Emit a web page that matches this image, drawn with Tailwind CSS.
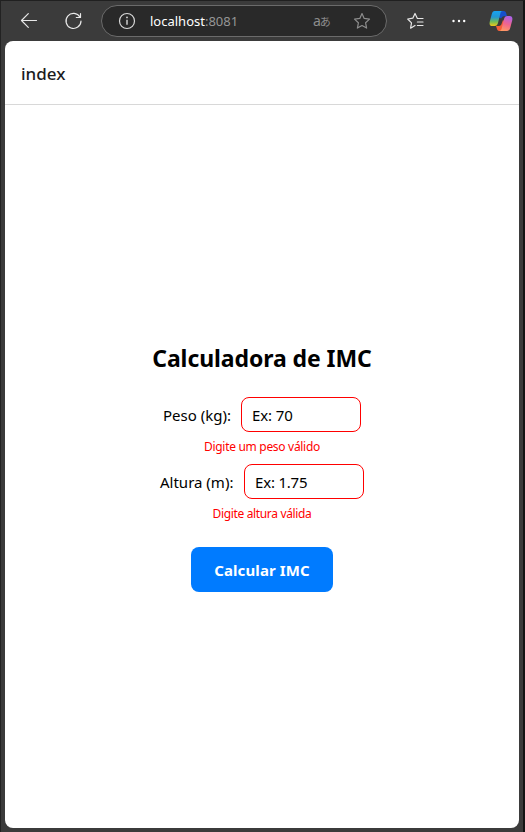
<!DOCTYPE html>
<html lang="pt">
<head>
<meta charset="utf-8">
<title>index</title>
<script src="https://cdn.jsdelivr.net/npm/@tailwindcss/browser@4"></script>
</head>
<body class="h-[832px] w-[525px] overflow-hidden bg-[#3b3b3b] font-['Noto_Sans',sans-serif]">
<div class="flex h-full w-full flex-col border-l border-r-2 border-t border-l-[#222] border-r-[#141414] border-t-[#202020] pr-1 pl-1">
  <header class="flex h-10 shrink-0 items-center text-[#e8e8e8]">
    <svg class="ml-[15px] h-5 w-5 shrink-0" viewBox="0 0 20 20" fill="none" stroke="currentColor" stroke-width="1.2" stroke-linecap="round" stroke-linejoin="round"><path d="M16.500 9.500H1.500M8.300 2.700 1.500 9.500l6.800 6.800"/></svg>
    <svg class="ml-6 h-5 w-5 shrink-0" viewBox="0 0 20 20" fill="none" stroke="currentColor" stroke-width="1.2" stroke-linecap="round" stroke-linejoin="round"><path d="M16 6.200A7.500 7.500 0 1 0 17 10M16.500 2.500v4h-4.200"/></svg>
    <div class="ml-[17px] flex h-8 w-[286px] shrink-0 items-center rounded-full border border-[#6b6b6b] bg-[#292929]">
      <svg class="ml-4 h-[18px] w-[18px]" viewBox="0 0 18 18" fill="none" stroke="#d8d8d8" stroke-width="1.2"><circle cx="9" cy="9" r="7.5"/><path d="M9 7.800v5" stroke-width="1.4"/><circle cx="9" cy="5.400" r=".9" fill="#d8d8d8" stroke="none"/></svg>
      <span class="ml-[14px] w-[90px] text-[13px] leading-4 tracking-[0px] whitespace-nowrap text-white">localhost<span class="text-[#969696]">:8081</span></span>
      <span class="ml-[73px] flex w-5 items-baseline text-[#8d8d8d]"><span class="text-[14px] leading-4">a</span><span class="-ml-px font-['Noto_Sans_CJK_JP',sans-serif] text-[11px] leading-4">あ</span></span>
      <svg class="ml-5 h-[18px] w-[18px]" viewBox="0 0 18 18" fill="none" stroke="#8d8d8d" stroke-width="1.2" stroke-linejoin="round"><path d="m9 1.500 2.200 4.900 5.300.7-3.900 3.700 1 5.300L9 13.500l-4.600 2.600 1-5.300-3.900-3.700 5.300-.7Z"/></svg>
    </div>
    <svg class="ml-5 h-[18px] w-[18px] shrink-0" viewBox="0 0 18 18" fill="none" stroke="currentColor" stroke-width="1.2" stroke-linejoin="round" stroke-linecap="round"><path d="M16 6.500H10.400L8 1.500 5.800 6.200.7 7l3.800 3.800-.9 5.400L8 13.500M10.400 10H16M10.400 13.500H16"/></svg>
    <svg class="ml-[26px] h-4 w-4 shrink-0" viewBox="0 0 16 16" fill="white"><circle cx="2.500" cy="8" r="1.200"/><circle cx="8" cy="8" r="1.200"/><circle cx="13.200" cy="8" r="1.200"/></svg>
    <svg class="ml-[22px] h-[22px] w-6 shrink-0" viewBox="0 0 24 22">
      <defs>
        <linearGradient id="a" x1="0" y1="0" x2="0" y2="1"><stop stop-color="#18a4f2"/><stop offset=".4" stop-color="#2297d2"/><stop offset=".72" stop-color="#72bd57"/><stop offset="1" stop-color="#f2c717"/></linearGradient>
        <linearGradient id="b" x1=".6" y1="0" x2=".3" y2="1"><stop stop-color="#ad62e8"/><stop offset=".5" stop-color="#f0648d"/><stop offset="1" stop-color="#ff9a62"/></linearGradient>
      </defs>
      <path fill="#164fcb" d="M11 1h3.600c1.500 0 2.100.8 2.500 2l.9 3.200h-3c-1.600 0-2.300.9-2.800 2.400L9 7Z"/>
      <path fill="#f45d38" d="M7 16h3c1.500 0 2.300-1 2.700-2.400L14 10l2 2-2.500 7c-.4 1.200-1 2-2.300 2h-1C8.600 21 8 19.500 7.700 18Z"/>
      <path fill="url(#a)" d="M5.800 1h8.200c-1.600 0-2.200.9-2.600 2.200L9 13c-.6 2-1.400 3-3.400 3H3.200C.7 16 .2 14 .8 11.500L2.800 4C3.400 2 4 1 5.800 1Z"/>
      <path fill="url(#b)" d="M18 21h-8c1.600 0 2.200-.9 2.600-2.200L15 9c.6-2 1.400-3 3.400-3h2.300c2.500 0 3.100 2 2.500 4.500L21.200 18c-.6 2-1.400 3-3.200 3Z"/>
    </svg>
  </header>
  <main class="flex h-[787px] w-[514px] shrink-0 flex-col overflow-hidden rounded-lg bg-white">
    <div class="flex h-16 shrink-0 items-center border-b border-[#d8d8d8] px-4 pt-0.5 text-[17px] font-medium tracking-[0px] text-[#1c1c1e]">index</div>
    <div class="flex flex-1 flex-col items-center pt-[237px] text-black">
      <h1 class="h-[55px] text-[23px] leading-[33px] font-bold tracking-[-0.08px] whitespace-nowrap">Calculadora de IMC</h1>
      <div class="flex h-[35px] items-center gap-[10px]">
        <label for="p" class="w-[68px] pt-px text-[15px] tracking-[0px] whitespace-nowrap">Peso (kg):</label>
        <input id="p" class="h-[35px] w-[120px] rounded-lg border border-[#ff0000] px-[10px] text-[15px] tracking-[-0.1px] placeholder:text-black" placeholder="Ex: 70">
      </div>
      <p class="h-8 pt-[7px] text-[12px] leading-4 tracking-[-0.3px] text-[#ff0000]">Digite um peso válido</p>
      <div class="flex h-[35px] items-center gap-[10px]">
        <label for="h" class="w-[74px] pt-px text-[15px] tracking-[0px] whitespace-nowrap">Altura (m):</label>
        <input id="h" class="h-[35px] w-[120px] rounded-lg border border-[#ff0000] px-[10px] text-[15px] tracking-[-0.2px] placeholder:text-black" placeholder="Ex: 1.75">
      </div>
      <p class="h-12 pt-[7px] text-[12px] leading-4 tracking-[-0.34px] text-[#ff0000]">Digite altura válida</p>
      <button class="h-[45px] w-[142px] rounded-lg bg-[#007bff] pt-0.5 text-[15px] font-bold tracking-[0.12px] text-white">Calcular IMC</button>
    </div>
  </main>
</div>
</body>
</html>
